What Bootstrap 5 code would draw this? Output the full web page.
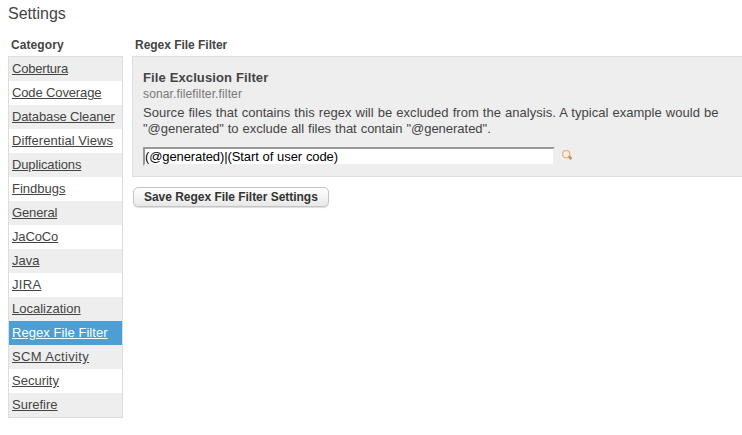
<!DOCTYPE html>
<html lang="en">
<head>
<meta charset="utf-8">
<meta name="viewport" content="width=device-width, initial-scale=1">
<title>Settings</title>
<link href="https://cdn.jsdelivr.net/npm/bootstrap@5.3.0/dist/css/bootstrap.min.css" rel="stylesheet">
<style>
body{font-family:"Liberation Sans",Arial,sans-serif;font-size:13px;line-height:16px;color:#444;background:#fff;overflow:hidden}
.page-title{font-size:16px;line-height:20px;font-weight:400;padding:4px 8px 0;margin:0 0 13px}
.section-title{font-size:12px;line-height:16px;font-weight:700;margin:0 0 3px;padding-left:3px;letter-spacing:-.03px}
.category-pane .section-title{letter-spacing:.08px}
.settings-layout{padding-left:8px;gap:9px}
.category-pane{width:115px}
.category-list{--bs-list-group-border-radius:0;border:1px solid #ddd}
.category-list .list-group-item{height:24px;padding:4px 3px;line-height:16px;border:0;color:#444;background:#fff}
.category-list .list-group-item span{text-decoration:underline}
.category-list .list-group-item:nth-child(odd){background:#eee}
.category-list .list-group-item.active{background:#4b9fd5;color:#fff;margin:0}
.tracking-tighter{letter-spacing:-.2px}
.tracking-tight{letter-spacing:-.13px}
.tracking-wide{letter-spacing:.06px}
.tracking-wider{letter-spacing:.34px}
.filter-panel{border:1px solid #ddd;border-right:0;background:#eee;height:121px;padding:13px 10px 0}
.property-name{font-size:13px;line-height:16px;font-weight:700;margin:0;letter-spacing:.08px;word-spacing:.39px}
.property-key{font-size:12px;line-height:16px;color:#777;margin:0 0 3px;letter-spacing:.13px}
.property-text{margin:0 0 10px;white-space:nowrap;word-spacing:.39px}
.property-text .line-one{letter-spacing:.035px}
.property-text .line-two{letter-spacing:-.02px}
.regex-input{width:412px;height:19px;border:2px solid;border-color:#999 #eee #eee #999;border-radius:0;padding:0;font-size:13px;line-height:15px;letter-spacing:-.1px;word-spacing:.39px;color:#000;background:#fff}
.search-icon{margin:2px 0 0 7px}
.save-btn{height:20px;margin:10px 0 0 1px;padding:0 10px;border:1px solid #c4c4c4;border-radius:5px;background:linear-gradient(#fff,#e8e8e8);box-shadow:0 1px 1px #ddd;font-size:12px;font-weight:700;line-height:18px;letter-spacing:-.03px;color:#333}
</style>
<script defer src="https://cdn.jsdelivr.net/npm/bootstrap@5.3.0/dist/js/bootstrap.bundle.min.js"></script>
</head>
<body>
<h1 class="page-title">Settings</h1>
<main class="settings-layout d-flex align-items-start">
  <nav class="category-pane flex-shrink-0">
    <h2 class="section-title">Category</h2>
    <div class="category-list list-group text-nowrap">
      <a class="list-group-item tracking-tighter" href="#"><span>Cobertura</span></a>
      <a class="list-group-item tracking-tight" href="#"><span>Code Coverage</span></a>
      <a class="list-group-item tracking-tight" href="#"><span>Database Cleaner</span></a>
      <a class="list-group-item tracking-wide" href="#"><span>Differential Views</span></a>
      <a class="list-group-item tracking-tight" href="#"><span>Duplications</span></a>
      <a class="list-group-item" href="#"><span>Findbugs</span></a>
      <a class="list-group-item tracking-tight" href="#"><span>General</span></a>
      <a class="list-group-item tracking-tight" href="#"><span>JaCoCo</span></a>
      <a class="list-group-item" href="#"><span>Java</span></a>
      <a class="list-group-item tracking-wider" href="#"><span>JIRA</span></a>
      <a class="list-group-item" href="#"><span>Localization</span></a>
      <a class="list-group-item tracking-wide active" href="#"><span>Regex File Filter</span></a>
      <a class="list-group-item tracking-wider" href="#"><span>SCM Activity</span></a>
      <a class="list-group-item" href="#"><span>Security</span></a>
      <a class="list-group-item" href="#"><span>Surefire</span></a>
    </div>
  </nav>
  <section class="flex-grow-1">
    <h2 class="section-title">Regex File Filter</h2>
    <div class="filter-panel">
      <h3 class="property-name">File Exclusion Filter</h3>
      <p class="property-key">sonar.filefilter.filter</p>
      <p class="property-text"><span class="line-one">Source files that contains this regex will be excluded from the analysis. A typical example would be</span><br><span class="line-two">"@generated" to exclude all files that contain "@generated".</span></p>
      <div class="d-flex align-items-start">
        <input class="regex-input" type="text" value="(@generated)|(Start of user code)" aria-label="File Exclusion Filter">
        <svg class="search-icon" width="10" height="11" viewBox="0 0 10 11" aria-hidden="true">
          <path d="M7 7.5 8.6 9.2" stroke="#ca9664" stroke-width="2.8" stroke-linecap="round"/>
          <rect x=".7" y="1.6" width="7" height="7" rx="2.6" fill="#f3ede6" stroke="#e6b77b" stroke-width="1.3"/>
          <path d="M7 7.8 8.5 9" stroke="#ca9664" stroke-width="1.8" stroke-linecap="round"/>
        </svg>
      </div>
    </div>
    <button class="save-btn btn d-block" type="button">Save Regex File Filter Settings</button>
  </section>
</main>
</body>
</html>
